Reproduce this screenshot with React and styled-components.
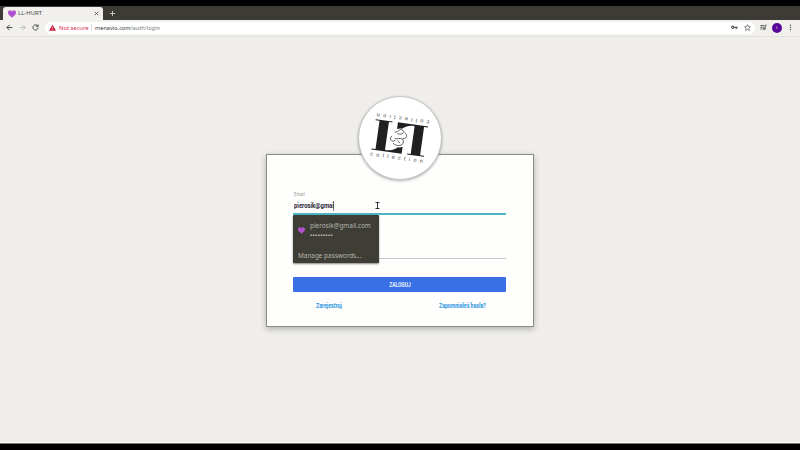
import React from "react";
import styled, { createGlobalStyle } from "styled-components";

const Global = createGlobalStyle`
  * { box-sizing: border-box; }
  body { margin: 0; background: #000; overflow: hidden; }
  input, button { font: inherit; }
`;
const Screen = styled.div`
  width: 800px; height: 450px; padding: 6px 0;
  display: flex; flex-direction: column; background: #000;
  font-family: "Noto Sans", sans-serif;
`;
const TabStrip = styled.header`
  height: 14px; display: flex; align-items: flex-end;
  background: #3c3b35;
`;
const Tab = styled.div`
  height: 13px; width: 100px; margin-left: 3px; padding: 0 4px 0 5px;
  display: flex; align-items: center; gap: 2px;
  background: #f1f0ed; border-radius: 3px 3px 0 0;
  font-size: 6px; line-height: 13px; color: #4c4c4c;
`;
const TabTitle = styled.span`flex: 1;`;
const StripButton = styled.span`
  display: flex; align-items: center; height: 13px; margin-left: 6px;
`;
const Toolbar = styled.nav`
  height: 17px; padding: 0 6px 1px; display: flex; align-items: center;
  background: #f1f0ed; border-bottom: 1px solid #e2e1de;
`;
const NavButtons = styled.div`display: flex; gap: 6px; width: 39px;`;
const AddressBar = styled.div`
  width: 710px; height: 12px; padding: 0 4px; border-radius: 6px;
  background: #fff; display: flex; align-items: center;
  font-size: 5.6px; line-height: 12px; color: #777;
`;
const Warning = styled.span`
  display: flex; align-items: center; gap: 3px; color: #d62b50; font-size: 5.8px;
  width: 43px; margin-right: 3px; height: 7px; border-right: 1px solid #ddd;
`;
const Host = styled.b`font-weight: 400; color: #383838;`;
const Address = styled.span`flex: 1;`;
const BarIcons = styled.div`display: flex; gap: 6px; align-items: center;`;
const Tools = styled.div`
  display: flex; align-items: center; gap: 5px; margin-left: 5px;
`;
const Avatar = styled.span`
  width: 10px; height: 10px; border-radius: 50%; background: #57079a;
  color: #e5d5f0; font-size: 4px; line-height: 10px; text-align: center;
`;
const Page = styled.main`
  flex: 1; display: flex; flex-direction: column; align-items: center;
  padding-top: 59px; background: #efeeeb; border-bottom: 1px solid #fff;
`;
const LogoDisc = styled.div`
  position: relative; z-index: 1; width: 84px; height: 84px; border-radius: 50%;
  background: #fff; border: 1px solid #c6c6c6; box-shadow: 0 1px 3px #0005;
`;
const Card = styled.form`
  width: 268px; height: 173px; margin-top: -26px; padding: 35px 26px 0 26px;
  background: #fefefd; border: 1px solid #8b8b8b;
  box-shadow: 0 2px 6px #0004;
  font-family: "Roboto", sans-serif;
`;
const Field = styled.div`
  position: relative; height: ${p => p.$height}px; display: flex; flex-direction: column;
  margin-right: 1px;
  border-bottom: ${p => p.$active ? "2px solid #4cb5c3" : "1px solid #c8c8c8"};
`;
const Narrow = styled.span`
  display: inline-block; white-space: nowrap; transform: scaleX(${p => p.$scale});
  transform-origin: ${p => p.$origin || "left"};
`;
const Label = styled.label`font-size: 6px; line-height: 7px; color: #999; padding-left: 1px;`;
const Value = styled.div`
  display: flex; font-size: 8px; font-weight: 700; line-height: 10px; color: #29243a; margin-top: 4px;
  padding-left: .5px;
`;
const Typed = styled.span`
  width: 40px; height: 10px; border-right: 1px solid #777;
`;
const Pointer = styled.svg`position: absolute; left: 82px; top: 12px;`;
const Menu = styled.aside`
  position: absolute; z-index: 2; left: 0; top: 25px; width: 85.5px; height: 48px;
  background: #3e3d36; border-radius: 1px; box-shadow: 0 1px 2px #0007;
  font-family: "Noto Sans", sans-serif; font-size: 6.4px; line-height: 9px; color: #b5b6ae;
`;
const Suggestion = styled.div`
  display: flex; align-items: center; gap: 5px; padding: 6px 5px 0;
`;
const Account = styled.div`display: flex; flex-direction: column;`;
const Dots = styled.span`font-size: 6px; line-height: 10px; letter-spacing: .3px; font-weight: 700;`;
const Manage = styled.div`padding: 11px 5px 0;`;
const Submit = styled.button`
  display: block; width: 213px; height: 15px; margin-top: 18px; padding: 1px 0 0; border: 0;
  border-radius: 1px; background: #3a70e6; color: #e9f1ff;
  font-size: 6.8px; font-weight: 700; line-height: 14px; text-align: center;
`;
const Links = styled.div`
  display: flex; justify-content: space-between; margin: 9px 21px 0 22.5px;
  font-size: 7.4px; font-weight: 700; line-height: 9px;
`;
const Link = styled.a`width: ${p => p.$width}px; color: #2a96df;`;
const WindowEdge = styled.footer`height: 1px; background: #77766f;`;

const Heart = ({ size }) => (
  <svg width={size} height={size} viewBox="0 0 24 24">
    <path d="M12 23 2 14C-2 9 0 1 6 1c3 0 5 2 6 4 1-2 3-4 6-4 6 0 8 8 4 13Z" fill="#b552cd" />
    <path d="M12 12 7 8M12 12l5-4" stroke="#8a42d4" strokeWidth="3" />
  </svg>
);
const Icon = ({ d, size = 7, color = "#555", width = 2.6 }) => (
  <svg width={size} height={size} viewBox="0 0 24 24" fill="none" stroke={color} strokeWidth={width}>
    <path d={d} />
  </svg>
);
const Logo = () => (
  <svg width="82" height="82" viewBox="0 0 82 82" fill="#202020" fontFamily="Liberation Sans, sans-serif">
    <g transform="translate(40.800 41) rotate(8)">
      <g fill="#444" fontSize="5.500" textRendering="geometricPrecision">
        <text x="-27" y="21.500" textLength="53">collection</text>
        <text x="-27" y="21.500" textLength="53" transform="rotate(180)">collection</text>
      </g>
      {[0, 180].map(a => (
        <path
          key={a}
          transform={`rotate(${a})`}
          d="M-26.500-15.300h17v1h-3.500V13.800h2c5 0 10-3 14-8.500h1V15.300h-30.500v-1h4v-28.600h-4Z"
        />
      ))}
      <ellipse rx="8.500" ry="9.500" fill="#fff" />
      <path d="M-6-5c5-1 4-5 8-3 3 3-2 5-5 4m7-2c4 2 3 6-1 6m-11-1c-3 3 0 7 4 4m-1-2c4 1 8-3 9 2 1 5-7 6-10 3m4-3 3 2" fill="none" stroke="#444" strokeWidth=".8" />
    </g>
  </svg>
);

export default function App() {
  return (
    <Screen>
      <Global />
      <TabStrip>
        <Tab><Heart size={8} /><TabTitle>LL-HURT</TabTitle><Icon size={5} width={4} d="m4 4 16 16M20 4 4 20" /></Tab>
        <StripButton><Icon size={7} width={3} color="#d5d5cf" d="M12 3v18M3 12h18" /></StripButton>
      </TabStrip>
      <Toolbar>
        <NavButtons>
          <Icon width={3.2} color="#444" d="M22 12H3m9-9-9 9 9 9" />
          <Icon color="#aaa" d="M2 12h19m-9-9 9 9-9 9" />
          <Icon width={3.2} color="#444" d="M20 7a9 9 0 1 0 1 7M21 2v7h-7" />
        </NavButtons>
        <AddressBar>
          <Warning>
            <svg width="7" height="7" viewBox="0 0 24 24"><path d="M12 2 24 23H0Z" fill="#c9213e" /><path d="M12 9v6m0 2v3" stroke="#fff" strokeWidth="2" /></svg>
            Not secure
          </Warning>
          <Address><Host>menavio.com</Host>/auth/login</Address>
          <BarIcons>
            <svg width="7" height="7" viewBox="0 0 24 24"><path fillRule="evenodd" d="M11 9h12v5h-3v4h-4v-4h-5A5.500 5.500 0 1 1 11 9ZM6 10a2 2 0 1 0 0 4 2 2 0 0 0 0-4Z" fill="#555" /></svg>
            <Icon width={2.4} d="m12 2 3 7 7 .6-5.300 5 1.700 7.400-6.400-4-6.400 4 1.700-7.400-5.300-5L9 9Z" />
          </BarIcons>
        </AddressBar>
        <Tools>
          <Icon width={3} d="M1 5h14M1 11h14M1 17h8m9 0V4h5M18 17a3 3 0 1 1-6 0 3 3 0 0 1 6 0Z" />
          <Avatar>L</Avatar>
          <svg width="7" height="7" viewBox="0 0 24 24" fill="#555"><circle cx="12" cy="4" r="2.500" /><circle cx="12" cy="12" r="2.500" /><circle cx="12" cy="20" r="2.500" /></svg>
        </Tools>
      </Toolbar>
      <Page>
        <LogoDisc><Logo /></LogoDisc>
        <Card>
          <Field $height={25} $active>
            <Label><Narrow $scale={0.72}>Email</Narrow></Label>
            <Value><Typed><Narrow $scale={0.74}>pierosik@gmai</Narrow></Typed></Value>
            <Pointer width="5" height="8" viewBox="0 0 5 8"><path d="M.5.5h4M2.500.5v6M.5 6.500h4" stroke="#333" fill="none" /></Pointer>
            <Menu>
              <Suggestion>
                <Heart size={7} />
                <Account><span>pierosik@gmail.com</span><Dots>•••••••••</Dots></Account>
              </Suggestion>
              <Manage>Manage passwords...</Manage>
            </Menu>
          </Field>
          <Field $height={44} />
          <Submit type="button"><Narrow $scale={0.72} $origin="center">ZALOGUJ</Narrow></Submit>
          <Links>
            <Link $width={27}><Narrow $scale={0.72}>Zarejestruj</Narrow></Link>
            <Link $width={47}><Narrow $scale={0.7}>Zapomniałeś hasła?</Narrow></Link>
          </Links>
        </Card>
      </Page>
      <WindowEdge />
    </Screen>
  );
}
